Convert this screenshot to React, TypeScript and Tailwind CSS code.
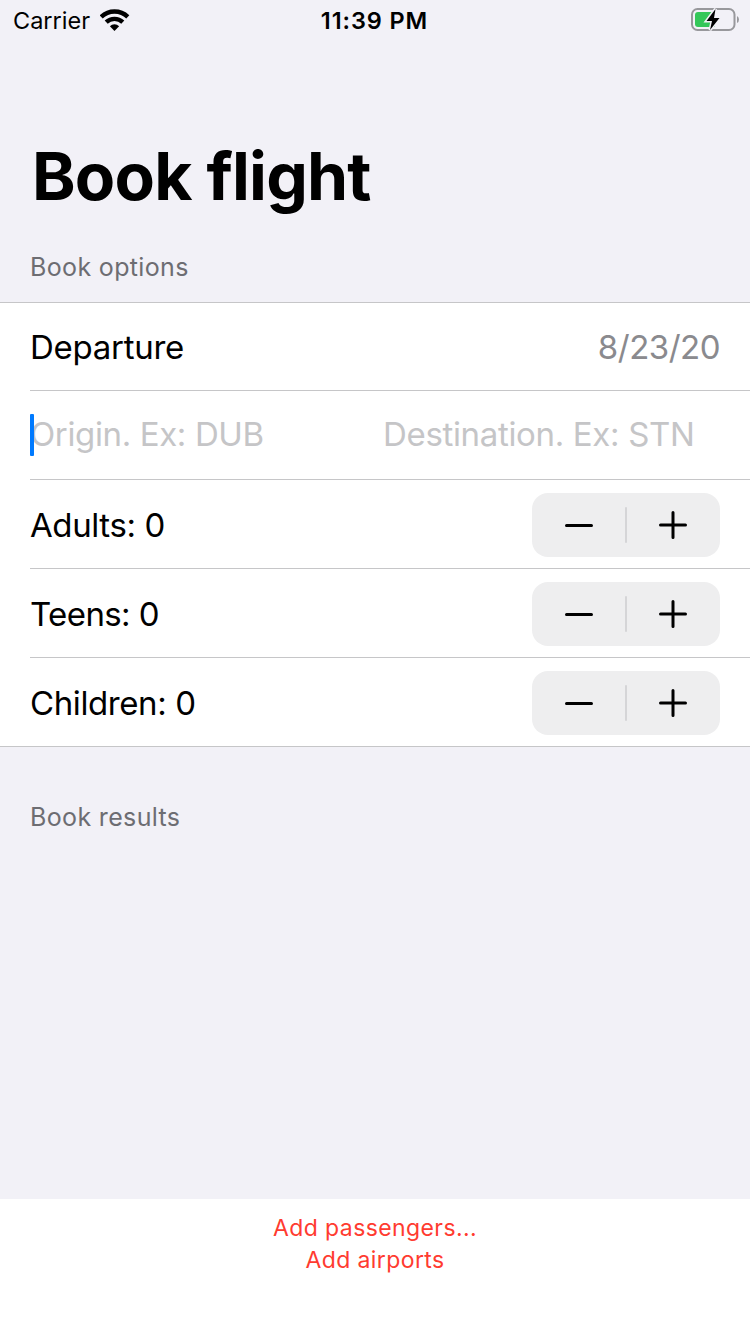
import React from "react";

function WifiIcon() {
  return (
    <svg className="-mt-px" width="30" height="22" viewBox="0 0 30 22">
      <g fill="none" stroke="#000" strokeWidth="4.4">
        <path d="M1.2 7.9A19.2 19.2 0 0 1 27.8 7.9" />
        <path d="M6.2 13.2A12 12 0 0 1 22.8 13.2" />
      </g>
      <path d="M9.9 17.2A6.6 6.6 0 0 1 19.1 17.2L14.5 22Z" />
    </svg>
  );
}

function BatteryIcon() {
  return (
    <svg className="-mt-[3px]" width="50" height="26" viewBox="0 0 50 26">
      <rect x="2" y="3" width="42.5" height="21" rx="5.5" fill="none" stroke="#98989c" strokeWidth="2" />
      <path d="M47 10Q49 11 49 13.5T47 17Z" fill="#98989c" />
      <path d="M8 6H25V21H8Q5 21 5 18V9Q5 6 8 6Z" fill="#34c759" />
      <path
        d="M25.5 3L16.5 15H22L20 24L29.5 12H24Z"
        fill="#000"
        stroke="#f2f1f7"
        strokeWidth="3"
        paintOrder="stroke"
      />
    </svg>
  );
}

function Stepper() {
  return (
    <svg className="rounded-2xl bg-[#eeeeef]" width="188" height="64" viewBox="0 0 188 64" fill="none" strokeLinecap="round">
      <path d="M34.5 32.5H59.5M128.5 32H153.5M141 19.5V44.5" stroke="#000" strokeWidth="3" />
      <path d="M94 15V49" stroke="#d5d5d7" strokeWidth="2" />
    </svg>
  );
}

const passengers = [
  { label: "Adults: 0", tracking: "tracking-[-0.4px]" },
  { label: "Teens: 0", tracking: "tracking-[-0.6px]" },
  { label: "Children: 0", tracking: "tracking-[-0.4px]" },
];

export default function App() {
  return (
    <div className="flex h-[1334px] w-[750px] flex-col overflow-hidden bg-[#f2f1f7] font-['Inter',sans-serif] text-black">
      <header className="grid h-10 grid-cols-[1fr_auto_1fr] items-center pr-[10px] pl-[13px]">
        <div className="flex items-center gap-[10px] pt-px text-[23.5px]">
          <span>Carrier</span>
          <WifiIcon />
        </div>
        <span className="-ml-1 pt-0.5 text-[23.5px] font-semibold tracking-[0.9px]">11:39 PM</span>
        <div className="flex justify-end">
          <BatteryIcon />
        </div>
      </header>
      <h1 className="mt-[90px] pl-8 text-[66px] leading-[92px] font-bold tracking-[-0.8px]">Book flight</h1>
      <div className="mt-[27px] h-[53px] pl-[30px] text-[25px] tracking-[0.35px] text-[#6d6d72]">Book options</div>
      <section className="border-y border-[#c6c6c8] bg-white pl-[30px] text-[33px]">
        <div className="flex h-[88px] items-center justify-between border-b border-[#c6c6c8] pt-[3px] pr-[30px]">
          <span className="tracking-[-0.27px]">Departure</span>
          <span className="tracking-[-0.5px] text-[#8a8a8e]">8/23/20</span>
        </div>
        <div className="relative grid h-[89px] grid-cols-[353px_1fr] items-center border-b border-[#c6c6c8] pb-px text-[#c5c5c7]">
          <span className="tracking-[-0.37px]">Origin. Ex: DUB</span>
          <span className="tracking-[-0.33px]">Destination. Ex: STN</span>
          <i className="absolute top-[23px] left-0 h-[42px] w-1 rounded-[1px] bg-[#007aff]" />
        </div>
        {passengers.map((p) => (
          <div
            key={p.label}
            className="flex h-[89px] items-center justify-between border-b border-[#c6c6c8] pt-[2px] pr-[30px] last:h-[88px] last:border-b-0"
          >
            <span className={"pt-[2px] " + p.tracking}>{p.label}</span>
            <Stepper />
          </div>
        ))}
      </section>
      <div className="mt-[52px] pl-[30px] text-[25px] tracking-[0.35px] text-[#6d6d72]">Book results</div>
      <footer className="mt-auto h-[135px] bg-white pt-[13px] text-center text-[23px] leading-8 tracking-[0.4px] text-[#ff3b30]">
        <div>Add passengers...</div>
        <div>Add airports</div>
      </footer>
    </div>
  );
}
